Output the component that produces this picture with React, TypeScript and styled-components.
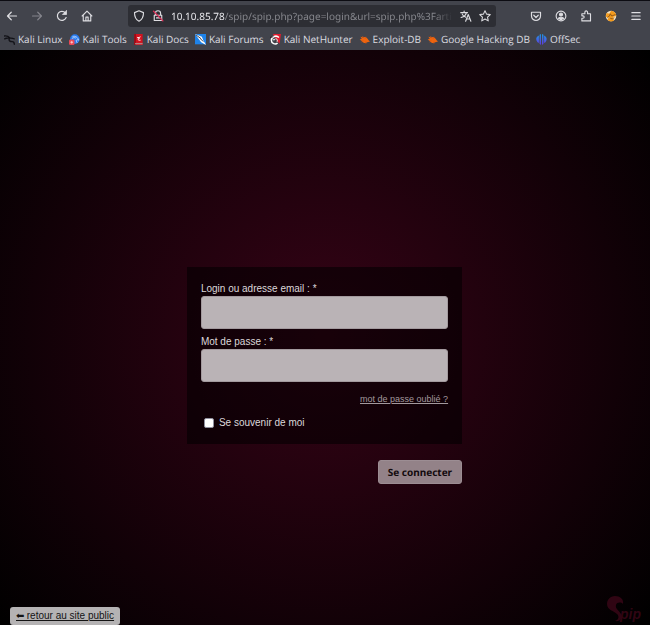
import React from "react";
import styled, { createGlobalStyle } from "styled-components";

const GlobalStyle = createGlobalStyle`
  * { box-sizing: border-box; }
  html, body { margin: 0; padding: 0; background: #000; }
`;

const Window = styled.div`
  display: flex;
  flex-direction: column;
  min-height: 100vh;
  font-family: "Liberation Sans", Arial, sans-serif;
`;

const Chrome = styled.header`
  background: #42444c;
  border-top: 1px solid #0c0c12;
  font-family: "Noto Sans", sans-serif;
  color: #e2e2e6;
`;

const Toolbar = styled.div`
  display: flex;
  align-items: center;
  height: 29px;
  padding: 0 8px 0 6px;
`;

const ToolGroup = styled.div`
  display: flex;
  gap: 13px;
`;

const IconButton = styled.button<{ $dim?: boolean }>`
  display: flex;
  flex: none;
  width: 12px;
  height: 12px;
  padding: 0;
  border: 0;
  background: none;
  color: ${(p) => (p.$dim ? "#83848b" : "#dedee2")};
  svg { width: 12px; height: 12px; }
`;

const AddressBar = styled.div`
  display: flex;
  align-items: center;
  flex: 1;
  min-width: 0;
  height: 22px;
  gap: 7px;
  margin: 0 34px 0 35px;
  padding: 0 5px;
  border-radius: 3px;
  background: #2d2e34;
`;

const Address = styled.div`
  flex: 1;
  min-width: 0;
  overflow: hidden;
  white-space: nowrap;
  font-size: 10px;
  line-height: 20px;
  color: #85868c;
  text-rendering: geometricPrecision;
  mask-image: linear-gradient(to right, #000 calc(100% - 20px), transparent);
`;

const Host = styled.span`
  color: #e8e8ec;
`;

const Bookmarks = styled.nav`
  display: flex;
  align-items: center;
  height: 20px;
  gap: 6px;
  padding: 0 4px 2px;
  text-rendering: geometricPrecision;
`;

const Bookmark = styled.a`
  display: flex;
  align-items: center;
  gap: 3px;
  font-family: "Open Sans", "Noto Sans", sans-serif;
  font-size: 10px;
  line-height: 16px;
  white-space: nowrap;
  color: #dcdce0;
  text-decoration: none;
  svg { width: 11px; height: 11px; flex: none; }
`;

const Page = styled.main`
  position: relative;
  display: flex;
  flex: 1;
  flex-direction: column;
  align-items: center;
  justify-content: center;
  padding: 76px 1px 0 0;
  background: radial-gradient(circle at 50% 50%, #360316 0%, #000 100%);
`;

const LoginForm = styled.form`
  display: flex;
  flex-direction: column;
  width: 42.4%;
  min-width: 240px;
`;

const Panel = styled.div`
  display: flex;
  flex-direction: column;
  padding: 14px;
  background: rgba(0, 0, 0, 0.55);
`;

const Field = styled.div`
  display: flex;
  flex-direction: column;
  margin-bottom: 5px;
`;

const Label = styled.label`
  font-size: 10px;
  line-height: 15px;
  color: #dcd8da;
`;

const TextInput = styled.input`
  width: 100%;
  height: 33px;
  padding: 0 8px;
  border: 1px solid #a39a9e;
  border-radius: 3px;
  background: #bab3b6;
  font-size: 14px;
`;

const ForgotLink = styled.a`
  align-self: flex-end;
  margin-top: 5px;
  font-size: 9px;
  line-height: 14px;
  color: #a3999d;
`;

const Remember = styled.div`
  display: flex;
  align-items: center;
  gap: 5px;
  margin-top: 9px;
  padding-left: 3px;
`;

const Checkbox = styled.input`
  appearance: none;
  width: 10px;
  height: 10px;
  margin: 0;
  border: 1px solid #8f8f9d;
  border-radius: 2px;
  background: #fff;
  &:checked { background: #7a1237; }
`;

const SubmitButton = styled.button`
  align-self: flex-end;
  height: 24px;
  margin-top: 16px;
  padding: 0 9px;
  border: 1px solid #9c8d93;
  border-radius: 3px;
  background: #938288;
  font-family: "Noto Sans", sans-serif;
  font-size: 10px;
  font-weight: 700;
  text-rendering: geometricPrecision;
  color: #120a0d;
`;

const BackLink = styled.a`
  position: absolute;
  left: 10px;
  bottom: 0;
  padding: 0 6px;
  border-radius: 3px;
  background: #b5b3b4;
  font-size: 10px;
  line-height: 18px;
  color: #141414;
`;

const Logo = styled.svg`
  position: absolute;
  right: 6px;
  bottom: 0;
  width: 38px;
  height: 30px;
`;

type IconProps = { children: React.ReactNode; width?: number };

function Icon({ children, width = 1.3 }: IconProps) {
  return (
    <svg viewBox="0 0 16 16" fill="none" stroke="currentColor" strokeWidth={width} strokeLinecap="round" strokeLinejoin="round" aria-hidden="true">
      {children}
    </svg>
  );
}

const KaliLinuxIcon = () => (
  <svg viewBox="0 0 16 16" fill="none" stroke="#131318" strokeLinecap="round">
    <path d="M0 3C4 2 7 4 9 6M1 7c3-2 6-1 9-1 2 0 3 1 5 1" strokeWidth="2" />
    <path d="M8 6c-2 4 1 5 4 5 2 0 3 1 3 4" strokeWidth="2" />
  </svg>
);

const KaliToolsIcon = () => (
  <svg viewBox="0 0 16 16">
    <circle cx="8.500" cy="7.500" r="7" fill="#277bf0" />
    <path d="M5 4c4-2 8 1 9 5-4-2-4 1-2 4M4 7c2-2 4-2 6-1" stroke="#cfe2ff" strokeWidth="1.200" fill="none" />
    <rect x="0" y="8" width="8" height="8" rx="2" fill="#e94855" />
    <path d="M4 10v4M2 12h4" stroke="#ffd9dc" strokeWidth="1.200" />
  </svg>
);

const KaliDocsIcon = () => (
  <svg viewBox="0 0 16 16">
    <path d="M2 0h12v16H2z" fill="#d3121f" />
    <path d="M2 0h2v16H2z" fill="#8d0913" />
    <path d="M3 13h11v2H3z" fill="#b98080" />
    <path d="M6 5c4 0 4 2 2 2s0 3 3 2M11 4L7 6" stroke="#fff" strokeWidth="1.300" fill="none" />
  </svg>
);

const KaliForumsIcon = () => (
  <svg viewBox="0 0 16 16">
    <path d="M0 0h16v15H0z" fill="#1e83ea" />
    <path d="M0 0l10 4 2 5 4 7-7-4-3-4z" fill="#fff" />
    <path d="M1 1l8 6M8 7l4 4" stroke="#171b22" strokeWidth="1.200" fill="none" />
  </svg>
);

const NetHunterIcon = () => (
  <svg viewBox="0 0 16 16">
    <path d="M4 0h12l-2 14-3-3z" fill="#df1c2e" />
    <path d="M13 5C9 1 2 4 2 9c0 5 6 7 9 4M5 9c1-3 6-2 5 2" stroke="#fff" strokeWidth="2.200" fill="none" />
    <path d="M0 5l5-1M5 7c3-1 5 1 4 4" stroke="#25141a" strokeWidth="1.200" fill="none" />
  </svg>
);

const ExploitIcon = () => (
  <svg viewBox="0 0 16 16">
    <path d="M2 4l4 1c3-2 6 0 8 4l2 2-4 1c-3 2-6 1-8-2L1 8l3-1z" fill="#ee650f" />
    <path d="M5 3l2 3M10 4L9 7M4 12l2-3M10 14V11" stroke="#d95612" strokeWidth="1" />
  </svg>
);

const OffSecIcon = () => (
  <svg viewBox="0 0 16 16">
    <defs>
      <linearGradient id="offsec" x1="0" y1="0" x2="0" y2="1">
        <stop offset="0" stopColor="#1b9bea" />
        <stop offset="1" stopColor="#6437e6" />
      </linearGradient>
    </defs>
    <path d="M7.200 0v16l-2-2V1zM8.800 0v16l2-2V1zM4.200 2v11l-2-1C-1 8 0 4 4.200 2zM11.800 2v11l2-1c3-4 2-8-2-10z" fill="url(#offsec)" />
  </svg>
);

const bookmarks = [
  { label: "Kali Linux", icon: <KaliLinuxIcon /> },
  { label: "Kali Tools", icon: <KaliToolsIcon /> },
  { label: "Kali Docs", icon: <KaliDocsIcon /> },
  { label: "Kali Forums", icon: <KaliForumsIcon /> },
  { label: "Kali NetHunter", icon: <NetHunterIcon /> },
  { label: "Exploit-DB", icon: <ExploitIcon /> },
  { label: "Google Hacking DB", icon: <ExploitIcon /> },
  { label: "OffSec", icon: <OffSecIcon /> },
];

function BrowserChrome() {
  return (
    <Chrome>
      <Toolbar>
        <ToolGroup>
          <IconButton aria-label="Back"><Icon width={1.600}><path d="M14 8H2M7 3L2 8l5 5" /></Icon></IconButton>
          <IconButton aria-label="Forward" $dim><Icon width={1.600}><path d="M2 8h12M9 3l5 5-5 5" /></Icon></IconButton>
          <IconButton aria-label="Reload">
            <Icon width={1.600}><path d="M13.500 10A6 6 0 1 1 12.500 4" /><path d="M14 1v5H9z" fill="currentColor" strokeWidth={1} /></Icon>
          </IconButton>
          <IconButton aria-label="Home">
            <Icon width={1.500}><path d="M1.500 8L8 1.500 14.500 8M3 7v7.500h10V7M6.500 14V9.500h3V14" /></Icon>
          </IconButton>
        </ToolGroup>
        <AddressBar>
          <IconButton aria-label="Protections"><Icon width={1.500}><path d="M8 1l6 2.500c0 5-1.500 9-6 11.500C3.500 12.500 2 8.500 2 3.500z" /></Icon></IconButton>
          <IconButton aria-label="Connection not secure">
            <Icon width={1.500}>
              <path d="M4.500 7V4.500a3.500 3.500 0 0 1 7 0V7M3 7h10v7H3zM6 10.500h4" />
              <path d="M2 1.500l12.500 13" stroke="#e2305a" strokeWidth={1.800} />
            </Icon>
          </IconButton>
          <Address><Host>10.10.85.78</Host>/spip/spip.php?page=login&amp;url=spip.php%3Farti</Address>
          <IconButton aria-label="Translate">
            <Icon width={1.500}><path d="M1 3.500h9M5.500 1.500v2M8.500 3.500C8 7 5 9 1.500 10M3 5.500C4 8 5.500 9 7.500 9.500M7.500 15l3.500-9 3.500 9M9 12h4" /></Icon>
          </IconButton>
          <IconButton aria-label="Bookmark this page">
            <Icon width={1.400}><path d="M8 1l2.100 4.500 4.900.6-3.600 3.400.9 5L8 12.100 3.700 14.500l.9-5L1 6.100l4.900-.6z" /></Icon>
          </IconButton>
        </AddressBar>
        <ToolGroup>
          <IconButton aria-label="Save to Pocket"><Icon width={1.600}><path d="M2 3h12v5c0 3.500-3 6-6 6s-6-2.500-6-6zM5 7l3 3 3-3" /></Icon></IconButton>
          <IconButton aria-label="Account">
            <Icon width={1.500}><circle cx="8" cy="8" r="6.500" /><circle cx="8" cy="6" r="2" fill="currentColor" /><path d="M4.500 11c2-1.500 5-1.500 7 0L8 13z" fill="currentColor" /></Icon>
          </IconButton>
          <IconButton aria-label="Extensions">
            <Icon width={1.500}><path d="M2.500 5h4V3a1.800 1.800 0 0 1 3.600 0v2H14v9.500H2.500V11H4a1.600 1.600 0 0 0 0-3.200H2.500z" /></Icon>
          </IconButton>
          <IconButton aria-label="FoxyProxy">
            <svg viewBox="0 0 16 16">
              <circle cx="8" cy="8" r="7" fill="#f0dfbf" />
              <path d="M8 1a7 7 0 0 1 7 7l-4 1 1 5a7 7 0 0 1-9-1l2-3-4-1 1-5 4 1z" fill="#f39a1c" />
              <path d="M3 10l3-2 1-3 2 3 5-2M7 11l3 1 2-2" stroke="#8a5519" strokeWidth="1.200" fill="none" />
            </svg>
          </IconButton>
          <IconButton aria-label="Menu"><Icon width={1.600}><path d="M2.500 3.500h11M2.500 8h11M2.500 12.500h11" /></Icon></IconButton>
        </ToolGroup>
      </Toolbar>
      <Bookmarks aria-label="Bookmarks">
        {bookmarks.map((b) => (
          <Bookmark key={b.label} href="#">{b.icon}{b.label}</Bookmark>
        ))}
      </Bookmarks>
    </Chrome>
  );
}

export default function App() {
  return (
    <Window>
      <GlobalStyle />
      <BrowserChrome />
      <Page>
        <LoginForm onSubmit={(e) => e.preventDefault()}>
          <Panel>
            <Field>
              <Label htmlFor="login">Login ou adresse email : *</Label>
              <TextInput id="login" type="text" />
            </Field>
            <Field>
              <Label htmlFor="password">Mot de passe : *</Label>
              <TextInput id="password" type="password" />
            </Field>
            <ForgotLink href="#">mot de passe oublié ?</ForgotLink>
            <Remember>
              <Checkbox id="remember" type="checkbox" />
              <Label htmlFor="remember">Se souvenir de moi</Label>
            </Remember>
          </Panel>
          <SubmitButton type="submit">Se connecter</SubmitButton>
        </LoginForm>
        <BackLink href="#">⬅ retour au site public</BackLink>
        <Logo viewBox="0 0 38 30" role="img" aria-label="Spip">
          <path d="M17 9C18 4 14 1 9 1 4 1 1 5 1 9c0 6 7 7 10 10 3 3 1 6-2 7 5 1 8-3 6-7-2-4-6-5-5-9 1-3 5-3 7-1z" fill="#300513" />
          <text x="14" y="24" fontSize="14" fontStyle="italic" fontWeight="700" fontFamily="Liberation Sans, sans-serif" fill="#300513">pip</text>
        </Logo>
      </Page>
    </Window>
  );
}
